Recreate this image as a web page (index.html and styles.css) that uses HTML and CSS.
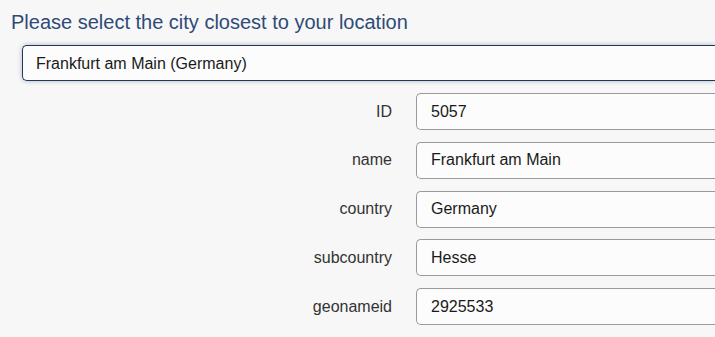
FILE: index.html
```html
<!DOCTYPE html>
<html lang="en">
<head>
    <meta charset="UTF-8">
    <meta name="viewport" content="width=device-width, initial-scale=1.0">
    <title>City selection</title>
    <link rel="stylesheet" href="styles.css">
</head>
<body>
    <div class="container">
        <h1>Please select the city closest to your location</h1>

        <div class="city-select">
            <select id="citySelect" class="select">
                <option>Frankfurt am Main (Germany)</option>
            </select>
        </div>

        <div class="details">
            <label class="label" for="cityId">ID</label>
            <input class="field" id="cityId" type="text" value="5057">

            <label class="label" for="cityName">name</label>
            <input class="field" id="cityName" type="text" value="Frankfurt am Main">

            <label class="label" for="cityCountry">country</label>
            <input class="field" id="cityCountry" type="text" value="Germany">

            <label class="label" for="citySub">subcountry</label>
            <input class="field" id="citySub" type="text" value="Hesse">

            <label class="label" for="cityGeo">geonameid</label>
            <input class="field" id="cityGeo" type="text" value="2925533">
        </div>
    </div>
</body>
</html>
```

FILE: styles.css
```css
html, body {
    overflow: hidden;
}
body {
    font-family: Arial, "Liberation Sans", sans-serif;
    margin: 0;
    background: #f7f7f7;
    color: #333;
}
.container {
    padding: 10px 0 0 11px;
}
h1 {
    font-size: 20px;
    font-weight: normal;
    line-height: 24px;
    color: #2f4a78;
    margin: 0 0 11px 0;
}
.city-select {
    padding: 4px 0 4px 11px;
    margin: -4px 0;
    overflow: hidden;
}
/* the boxes run on past the right edge of the window */
.select {
    appearance: none;
    -webkit-appearance: none;
    display: block;
    width: 100%;
    height: 36px;
    padding: 0 13px;
    font-family: inherit;
    font-size: 16px;
    color: #1a1a1a;
    background: #fcfcfc;
    border: 1px solid #1d3a5c;
    border-right: none;
    border-radius: 5px 0 0 5px;
    box-shadow: 0 0 5px rgba(40, 60, 90, 0.35);
    box-sizing: border-box;
    outline: none;
}
.details {
    display: grid;
    grid-template-columns: 381px 1fr;
    column-gap: 24px;
    row-gap: 11.75px;
    margin-top: 12px;
    align-items: center;
}
.label {
    text-align: right;
    font-size: 16px;
    color: #333;
}
.field {
    width: 100%;
    height: 37px;
    padding: 0 14px;
    font-family: inherit;
    font-size: 16px;
    color: #1a1a1a;
    background: #fcfcfc;
    border: 1px solid #9a9a9a;
    border-right: none;
    border-radius: 5px 0 0 5px;
    box-sizing: border-box;
    outline: none;
}
```
